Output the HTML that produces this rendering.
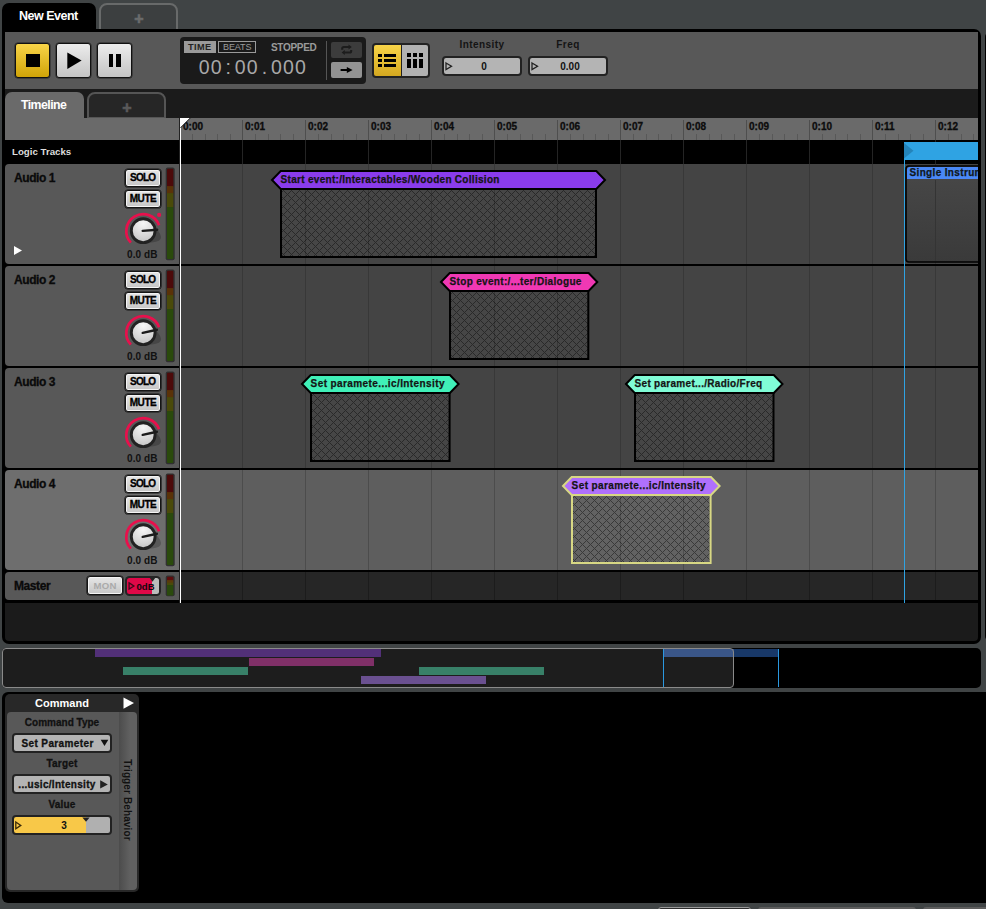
<!DOCTYPE html>
<html><head><meta charset="utf-8"><title>New Event</title><style>
html,body{margin:0;padding:0}
body{width:986px;height:909px;overflow:hidden;position:relative;background:#404445;font-family:"Liberation Sans",sans-serif;font-weight:bold;font-size:10px;color:#1a1a1a}
div,span{position:absolute;box-sizing:border-box;white-space:nowrap}
svg{position:absolute;overflow:visible}
.t{line-height:1;}
.k{-webkit-text-stroke:0.3px currentColor}
.btn{border:1px solid #141414;box-shadow:inset 0 0 0 1px #f4f4f4,0 0 0 0.6px #141414;border-radius:3px;background:linear-gradient(#e6e6e6,#c6c6c6)}
.fld{border:2px solid #222;border-radius:4px;background:#b4b4b4}
</style></head><body>
<div style="left:2px;top:3px;width:94px;height:30px;background:#000;border-radius:7px 7px 0 0"></div>
<div class="t" style="left:19px;top:9.6px;font-size:12.5px;letter-spacing:-0.5px;color:#fff">New Event</div>
<div style="left:99px;top:3px;width:79px;height:28px;background:#3c3f40;border:2px solid #686a6a;border-radius:8px 8px 0 0"></div>
<div class="t" style="left:134.3px;top:10.5px;font-size:16px;color:#6a6c6c;-webkit-text-stroke:0.6px #6a6c6c">+</div>
<div style="left:985px;top:33px;width:4px;height:607px;background:#000;border-radius:4px 0 0 4px"></div>
<div style="left:2px;top:29px;width:979px;height:615px;background:#000;border-radius:0 7px 7px 7px"></div>
<div id="main" style="left:5px;top:32px;width:973px;height:609px;background:#1b1b1b;overflow:hidden;border-radius:0 0 4px 4px">
<div style="left:0;top:0;width:973px;height:57px;background:#585858"></div>
<div style="left:10px;top:11px;width:35px;height:35px;border:1px solid #111;border-radius:3px;background:linear-gradient(#f8d448,#d0a408);box-shadow:0 0 0 0.5px #222"><div style="left:10px;top:10px;width:13.5px;height:13.2px;background:#000"></div></div>
<div style="left:51px;top:11px;width:35px;height:35px;border:1px solid #111;border-radius:3px;background:linear-gradient(#ececec,#c4c4c4);box-shadow:0 0 0 0.5px #222"><svg style="left:0;top:0" width="33" height="33"><path d="M10.3 8.4 L24.6 16.6 L10.3 24.9Z" fill="#000"/></svg></div>
<div style="left:92px;top:11px;width:35px;height:35px;border:1px solid #111;border-radius:3px;background:linear-gradient(#ececec,#c4c4c4);box-shadow:0 0 0 0.5px #222"><div style="left:11.2px;top:10px;width:4.2px;height:13.2px;background:#000"></div><div style="left:18.4px;top:10px;width:4.5px;height:13.2px;background:#000"></div></div>
<div style="left:175px;top:5px;width:186px;height:47px;background:#1a1a1a;border-radius:4px"></div>
<div style="left:179px;top:9px;width:32px;height:12px;background:#9a9a9a"></div>
<div class="t" style="left:183px;top:11.299999999999997px;font-size:9.2px;letter-spacing:0.4px;color:#222">TIME</div>
<div style="left:213px;top:9px;width:38px;height:12px;border:1px solid #9a9a9a"></div>
<div class="t" style="left:218px;top:11.200000000000003px;font-size:9px;letter-spacing:-0.1px;color:#9a9a9a;font-weight:normal">BEATS</div>
<div class="t" style="left:266px;top:10.600000000000001px;font-size:10px;letter-spacing:-0.3px;color:#9a9a9a">STOPPED</div>
<span class="t" style="left:193.10px;top:26px;width:12px;text-align:center;font-size:19.5px;font-weight:normal;color:#a8a8a8">0</span><span class="t" style="left:205.15px;top:26px;width:12px;text-align:center;font-size:19.5px;font-weight:normal;color:#a8a8a8">0</span><span class="t" style="left:217.20px;top:26px;width:12px;text-align:center;font-size:19.5px;font-weight:normal;color:#a8a8a8">:</span><span class="t" style="left:229.25px;top:26px;width:12px;text-align:center;font-size:19.5px;font-weight:normal;color:#a8a8a8">0</span><span class="t" style="left:241.30px;top:26px;width:12px;text-align:center;font-size:19.5px;font-weight:normal;color:#a8a8a8">0</span><span class="t" style="left:253.35px;top:26px;width:12px;text-align:center;font-size:19.5px;font-weight:normal;color:#a8a8a8">.</span><span class="t" style="left:265.40px;top:26px;width:12px;text-align:center;font-size:19.5px;font-weight:normal;color:#a8a8a8">0</span><span class="t" style="left:277.45px;top:26px;width:12px;text-align:center;font-size:19.5px;font-weight:normal;color:#a8a8a8">0</span><span class="t" style="left:289.50px;top:26px;width:12px;text-align:center;font-size:19.5px;font-weight:normal;color:#a8a8a8">0</span>
<div style="left:321px;top:9px;width:1px;height:39px;background:#555"></div>
<div style="left:326px;top:10px;width:31px;height:16px;background:#3c3c3c;border-radius:2px"></div>
<svg style="left:326px;top:10px" width="31" height="16"><g fill="none" stroke="#1c1c1c" stroke-width="2.1"><path d="M11.2 7.8 V6.6 Q11.2 5 12.8 5 H18"/><path d="M20.2 8 V8.9 Q20.2 10.5 18.6 10.5 H13.4"/></g><path d="M17.5 2.6 L20.8 5 L17.5 7.4Z" fill="#1c1c1c"/><path d="M13.8 8.1 L10.6 10.5 L13.8 12.9Z" fill="#1c1c1c"/></svg>
<div style="left:326px;top:30px;width:31px;height:16px;background:#939393;border-radius:2px"></div>
<svg style="left:326px;top:30px" width="31" height="16"><path d="M9.6 8 H17" stroke="#000" stroke-width="2"/><path d="M15.8 4.9 L21.6 8 L15.8 11.1Z" fill="#000"/></svg>
<div style="left:367px;top:11px;width:58px;height:35px;background:#222;border-radius:4px"></div>
<div style="left:369px;top:13px;width:26.6px;height:31px;background:linear-gradient(#f8d448,#d4a820);border-radius:2px 0 0 2px"></div>
<div style="left:397px;top:13px;width:26px;height:31px;background:#b2b2b2;border-radius:0 2px 2px 0"></div>
<div style="left:373px;top:22px;width:4px;height:3px;background:#000"></div><div style="left:379px;top:22px;width:12px;height:3px;background:#000"></div><div style="left:373px;top:27px;width:4px;height:3px;background:#000"></div><div style="left:379px;top:27px;width:12px;height:3px;background:#000"></div><div style="left:373px;top:32px;width:4px;height:3px;background:#000"></div><div style="left:379px;top:32px;width:12px;height:3px;background:#000"></div><div style="left:402px;top:21px;width:4px;height:4px;background:#000"></div><div style="left:402px;top:26.5px;width:4px;height:9px;background:#000"></div><div style="left:408px;top:21px;width:4px;height:4px;background:#000"></div><div style="left:408px;top:26.5px;width:4px;height:9px;background:#000"></div><div style="left:414px;top:21px;width:4px;height:4px;background:#000"></div><div style="left:414px;top:26.5px;width:4px;height:9px;background:#000"></div>
<div class="t" style="left:437px;top:8px;width:80px;text-align:center;font-size:10px;letter-spacing:0.45px;color:#141414">Intensity</div>
<div class="fld" style="left:437px;top:24px;width:80px;height:20px"></div>
<svg style="left:440px;top:30px" width="9" height="9"><path d="M1 1 L6.5 4.2 L1 7.5Z" fill="none" stroke="#222" stroke-width="1.3"/></svg>
<div class="t" style="left:437px;top:30px;width:84px;text-align:center;font-size:10px;color:#111">0</div>
<div class="t" style="left:523px;top:8px;width:80px;text-align:center;font-size:10px;letter-spacing:0.45px;color:#141414">Freq</div>
<div class="fld" style="left:523px;top:24px;width:80px;height:20px"></div>
<svg style="left:526px;top:30px" width="9" height="9"><path d="M1 1 L6.5 4.2 L1 7.5Z" fill="none" stroke="#222" stroke-width="1.3"/></svg>
<div class="t" style="left:523px;top:30px;width:84px;text-align:center;font-size:10px;color:#111">0.00</div>
<div style="left:0;top:60px;width:79px;height:27px;background:#6a6a6a;border-radius:7px 7px 0 0"></div>
<div class="t" style="left:16px;top:67.4px;font-size:12.3px;letter-spacing:-0.55px;color:#fff">Timeline</div>
<div style="left:82px;top:60px;width:79px;height:27px;background:#262626;border:2px solid #555;border-radius:8px 8px 0 0"></div>
<div class="t" style="left:117.3px;top:67.5px;font-size:16px;color:#5a5a5a;-webkit-text-stroke:0.6px #5a5a5a">+</div>
<div style="left:0;top:86px;width:973px;height:22px;background:#6a6a6a"></div>
<div class="t k" style="left:178px;top:90.4px;font-size:10px;letter-spacing:0.05px;color:#0c0c0c">0:00</div><div style="left:187px;top:102px;width:1px;height:6px;background:#585858"></div><div style="left:200px;top:102px;width:1px;height:6px;background:#585858"></div><div style="left:212px;top:102px;width:1px;height:6px;background:#585858"></div><div style="left:225px;top:102px;width:1px;height:6px;background:#585858"></div><div style="left:237px;top:88px;width:1px;height:20px;background:#4e4e4e"></div><div class="t k" style="left:240px;top:90.4px;font-size:10px;letter-spacing:0.05px;color:#0c0c0c">0:01</div><div style="left:250px;top:102px;width:1px;height:6px;background:#585858"></div><div style="left:263px;top:102px;width:1px;height:6px;background:#585858"></div><div style="left:275px;top:102px;width:1px;height:6px;background:#585858"></div><div style="left:288px;top:102px;width:1px;height:6px;background:#585858"></div><div style="left:300px;top:88px;width:1px;height:20px;background:#4e4e4e"></div><div class="t k" style="left:303px;top:90.4px;font-size:10px;letter-spacing:0.05px;color:#0c0c0c">0:02</div><div style="left:313px;top:102px;width:1px;height:6px;background:#585858"></div><div style="left:326px;top:102px;width:1px;height:6px;background:#585858"></div><div style="left:338px;top:102px;width:1px;height:6px;background:#585858"></div><div style="left:351px;top:102px;width:1px;height:6px;background:#585858"></div><div style="left:363px;top:88px;width:1px;height:20px;background:#4e4e4e"></div><div class="t k" style="left:366px;top:90.4px;font-size:10px;letter-spacing:0.05px;color:#0c0c0c">0:03</div><div style="left:376px;top:102px;width:1px;height:6px;background:#585858"></div><div style="left:389px;top:102px;width:1px;height:6px;background:#585858"></div><div style="left:401px;top:102px;width:1px;height:6px;background:#585858"></div><div style="left:414px;top:102px;width:1px;height:6px;background:#585858"></div><div style="left:426px;top:88px;width:1px;height:20px;background:#4e4e4e"></div><div class="t k" style="left:429px;top:90.4px;font-size:10px;letter-spacing:0.05px;color:#0c0c0c">0:04</div><div style="left:439px;top:102px;width:1px;height:6px;background:#585858"></div><div style="left:452px;top:102px;width:1px;height:6px;background:#585858"></div><div style="left:464px;top:102px;width:1px;height:6px;background:#585858"></div><div style="left:477px;top:102px;width:1px;height:6px;background:#585858"></div><div style="left:489px;top:88px;width:1px;height:20px;background:#4e4e4e"></div><div class="t k" style="left:492px;top:90.4px;font-size:10px;letter-spacing:0.05px;color:#0c0c0c">0:05</div><div style="left:502px;top:102px;width:1px;height:6px;background:#585858"></div><div style="left:515px;top:102px;width:1px;height:6px;background:#585858"></div><div style="left:527px;top:102px;width:1px;height:6px;background:#585858"></div><div style="left:540px;top:102px;width:1px;height:6px;background:#585858"></div><div style="left:552px;top:88px;width:1px;height:20px;background:#4e4e4e"></div><div class="t k" style="left:555px;top:90.4px;font-size:10px;letter-spacing:0.05px;color:#0c0c0c">0:06</div><div style="left:565px;top:102px;width:1px;height:6px;background:#585858"></div><div style="left:578px;top:102px;width:1px;height:6px;background:#585858"></div><div style="left:590px;top:102px;width:1px;height:6px;background:#585858"></div><div style="left:603px;top:102px;width:1px;height:6px;background:#585858"></div><div style="left:615px;top:88px;width:1px;height:20px;background:#4e4e4e"></div><div class="t k" style="left:618px;top:90.4px;font-size:10px;letter-spacing:0.05px;color:#0c0c0c">0:07</div><div style="left:628px;top:102px;width:1px;height:6px;background:#585858"></div><div style="left:641px;top:102px;width:1px;height:6px;background:#585858"></div><div style="left:653px;top:102px;width:1px;height:6px;background:#585858"></div><div style="left:666px;top:102px;width:1px;height:6px;background:#585858"></div><div style="left:678px;top:88px;width:1px;height:20px;background:#4e4e4e"></div><div class="t k" style="left:681px;top:90.4px;font-size:10px;letter-spacing:0.05px;color:#0c0c0c">0:08</div><div style="left:691px;top:102px;width:1px;height:6px;background:#585858"></div><div style="left:704px;top:102px;width:1px;height:6px;background:#585858"></div><div style="left:716px;top:102px;width:1px;height:6px;background:#585858"></div><div style="left:729px;top:102px;width:1px;height:6px;background:#585858"></div><div style="left:741px;top:88px;width:1px;height:20px;background:#4e4e4e"></div><div class="t k" style="left:744px;top:90.4px;font-size:10px;letter-spacing:0.05px;color:#0c0c0c">0:09</div><div style="left:754px;top:102px;width:1px;height:6px;background:#585858"></div><div style="left:767px;top:102px;width:1px;height:6px;background:#585858"></div><div style="left:779px;top:102px;width:1px;height:6px;background:#585858"></div><div style="left:792px;top:102px;width:1px;height:6px;background:#585858"></div><div style="left:804px;top:88px;width:1px;height:20px;background:#4e4e4e"></div><div class="t k" style="left:807px;top:90.4px;font-size:10px;letter-spacing:0.05px;color:#0c0c0c">0:10</div><div style="left:817px;top:102px;width:1px;height:6px;background:#585858"></div><div style="left:830px;top:102px;width:1px;height:6px;background:#585858"></div><div style="left:842px;top:102px;width:1px;height:6px;background:#585858"></div><div style="left:855px;top:102px;width:1px;height:6px;background:#585858"></div><div style="left:867px;top:88px;width:1px;height:20px;background:#4e4e4e"></div><div class="t k" style="left:870px;top:90.4px;font-size:10px;letter-spacing:0.05px;color:#0c0c0c">0:11</div><div style="left:880px;top:102px;width:1px;height:6px;background:#585858"></div><div style="left:893px;top:102px;width:1px;height:6px;background:#585858"></div><div style="left:905px;top:102px;width:1px;height:6px;background:#585858"></div><div style="left:918px;top:102px;width:1px;height:6px;background:#585858"></div><div style="left:930px;top:88px;width:1px;height:20px;background:#4e4e4e"></div><div class="t k" style="left:933px;top:90.4px;font-size:10px;letter-spacing:0.05px;color:#0c0c0c">0:12</div><div style="left:943px;top:102px;width:1px;height:6px;background:#585858"></div><div style="left:956px;top:102px;width:1px;height:6px;background:#585858"></div><div style="left:968px;top:102px;width:1px;height:6px;background:#585858"></div>
<div style="left:0;top:108px;width:973px;height:24px;background:#000"></div>
<div class="t" style="left:7px;top:115px;font-size:9.7px;color:#ddd">Logic Tracks</div>
<div style="left:0;top:132px;width:973px;height:439px;background:#000"></div>
<svg width="0" height="0"><defs><radialGradient id="kg" cx="0.5" cy="0.2" r="0.9"><stop offset="0" stop-color="#f6f6f6"/><stop offset="0.6" stop-color="#d6d6d6"/><stop offset="1" stop-color="#bcbcbc"/></radialGradient></defs></svg>
<div style="left:0;top:132px;width:174px;height:100px;background:#585858;border-radius:4px 0 0 4px"></div>
<div style="left:176px;top:132px;width:797px;height:100px;background:#444444"></div>
<div class="t k" style="left:9px;top:140.2px;font-size:12px;letter-spacing:-0.42px;color:#0a0a0a">Audio 1</div>
<div class="btn" style="left:120px;top:136.5px;width:36px;height:18px"></div><div class="t k" style="left:120px;top:140.5px;width:36px;text-align:center;font-size:10px;color:#000;letter-spacing:-0.8px;text-indent:-0.8px">SOLO</div>
<div class="btn" style="left:120px;top:157.5px;width:36px;height:18px"></div><div class="t k" style="left:120px;top:161.5px;width:36px;text-align:center;font-size:10px;color:#000;letter-spacing:-0.45px">MUTE</div>
<div class="t" style="left:122px;top:218px;font-size:10px;color:#111;letter-spacing:0.1px">0.0 dB</div>
<svg style="left:0;top:132px" width="174" height="100"><path d="M125.84 78.63 A16.9 16.9 0 1 1 154.08 61.32" fill="none" stroke="#e8104c" stroke-width="2.7"/><path d="M150.33 63.68 Q165.15 78.70 141.65 78.72Z" fill="#000" fill-opacity="0.2"/><circle cx="138.2" cy="66.7" r="11.9" fill="url(#kg)" stroke="#222" stroke-width="2.9"/><path d="M137.70 66.90 L152.17 65.72" stroke="#1c1c1c" stroke-width="2.4" stroke-linecap="round"/><circle cx="154.1" cy="50.900000000000006" r="2.1" fill="#e8104c"/><rect x="160.7" y="3.6" width="9" height="92.6" rx="2" fill="#303030"/><clipPath id="mc160.7_3.6"><rect x="162.0" y="4.8" width="6.4" height="90.19999999999999" rx="1"/></clipPath><g clip-path="url(#mc160.7_3.6)"><rect x="161.7" y="3.6" width="7" height="19.0" fill="#4c0a0a"/><rect x="161.7" y="22.1" width="7" height="7.5" fill="#5a3208"/><rect x="161.7" y="29.1" width="7" height="14.5" fill="#4a4a0a"/><rect x="161.7" y="43.1" width="7" height="52.39999999999999" fill="#2a4a0c"/></g></svg>
<div style="left:0;top:234px;width:174px;height:100px;background:#585858;border-radius:4px 0 0 4px"></div>
<div style="left:176px;top:234px;width:797px;height:100px;background:#444444"></div>
<div class="t k" style="left:9px;top:242.2px;font-size:12px;letter-spacing:-0.42px;color:#0a0a0a">Audio 2</div>
<div class="btn" style="left:120px;top:238.5px;width:36px;height:18px"></div><div class="t k" style="left:120px;top:242.5px;width:36px;text-align:center;font-size:10px;color:#000;letter-spacing:-0.8px;text-indent:-0.8px">SOLO</div>
<div class="btn" style="left:120px;top:259.5px;width:36px;height:18px"></div><div class="t k" style="left:120px;top:263.5px;width:36px;text-align:center;font-size:10px;color:#000;letter-spacing:-0.45px">MUTE</div>
<div class="t" style="left:122px;top:320px;font-size:10px;color:#111;letter-spacing:0.1px">0.0 dB</div>
<svg style="left:0;top:234px" width="174" height="100"><path d="M125.84 78.63 A16.9 16.9 0 1 1 154.08 61.32" fill="none" stroke="#e8104c" stroke-width="2.7"/><path d="M150.33 63.68 Q165.15 78.70 141.65 78.72Z" fill="#000" fill-opacity="0.2"/><circle cx="138.2" cy="66.7" r="11.9" fill="url(#kg)" stroke="#222" stroke-width="2.9"/><path d="M137.70 66.90 L151.89 63.79" stroke="#1c1c1c" stroke-width="2.4" stroke-linecap="round"/><rect x="160.7" y="3.6" width="9" height="92.6" rx="2" fill="#303030"/><clipPath id="mc160.7_3.6"><rect x="162.0" y="4.8" width="6.4" height="90.19999999999999" rx="1"/></clipPath><g clip-path="url(#mc160.7_3.6)"><rect x="161.7" y="3.6" width="7" height="19.0" fill="#4c0a0a"/><rect x="161.7" y="22.1" width="7" height="7.5" fill="#5a3208"/><rect x="161.7" y="29.1" width="7" height="14.5" fill="#4a4a0a"/><rect x="161.7" y="43.1" width="7" height="52.39999999999999" fill="#2a4a0c"/></g></svg>
<div style="left:0;top:336px;width:174px;height:100px;background:#585858;border-radius:4px 0 0 4px"></div>
<div style="left:176px;top:336px;width:797px;height:100px;background:#444444"></div>
<div class="t k" style="left:9px;top:344.2px;font-size:12px;letter-spacing:-0.42px;color:#0a0a0a">Audio 3</div>
<div class="btn" style="left:120px;top:340.5px;width:36px;height:18px"></div><div class="t k" style="left:120px;top:344.5px;width:36px;text-align:center;font-size:10px;color:#000;letter-spacing:-0.8px;text-indent:-0.8px">SOLO</div>
<div class="btn" style="left:120px;top:361.5px;width:36px;height:18px"></div><div class="t k" style="left:120px;top:365.5px;width:36px;text-align:center;font-size:10px;color:#000;letter-spacing:-0.45px">MUTE</div>
<div class="t" style="left:122px;top:422px;font-size:10px;color:#111;letter-spacing:0.1px">0.0 dB</div>
<svg style="left:0;top:336px" width="174" height="100"><path d="M125.84 78.63 A16.9 16.9 0 1 1 154.08 61.32" fill="none" stroke="#e8104c" stroke-width="2.7"/><path d="M150.33 63.68 Q165.15 78.70 141.65 78.72Z" fill="#000" fill-opacity="0.2"/><circle cx="138.2" cy="66.7" r="11.9" fill="url(#kg)" stroke="#222" stroke-width="2.9"/><path d="M137.70 66.90 L151.89 63.79" stroke="#1c1c1c" stroke-width="2.4" stroke-linecap="round"/><rect x="160.7" y="3.6" width="9" height="92.6" rx="2" fill="#303030"/><clipPath id="mc160.7_3.6"><rect x="162.0" y="4.8" width="6.4" height="90.19999999999999" rx="1"/></clipPath><g clip-path="url(#mc160.7_3.6)"><rect x="161.7" y="3.6" width="7" height="19.0" fill="#4c0a0a"/><rect x="161.7" y="22.1" width="7" height="7.5" fill="#5a3208"/><rect x="161.7" y="29.1" width="7" height="14.5" fill="#4a4a0a"/><rect x="161.7" y="43.1" width="7" height="52.39999999999999" fill="#2a4a0c"/></g></svg>
<div style="left:0;top:438px;width:174px;height:100px;background:#6e6e6e;border-radius:4px 0 0 4px"></div>
<div style="left:176px;top:438px;width:797px;height:100px;background:#5e5e5e"></div>
<div class="t k" style="left:9px;top:446.2px;font-size:12px;letter-spacing:-0.42px;color:#0a0a0a">Audio 4</div>
<div class="btn" style="left:120px;top:442.5px;width:36px;height:18px"></div><div class="t k" style="left:120px;top:446.5px;width:36px;text-align:center;font-size:10px;color:#000;letter-spacing:-0.8px;text-indent:-0.8px">SOLO</div>
<div class="btn" style="left:120px;top:463.5px;width:36px;height:18px"></div><div class="t k" style="left:120px;top:467.5px;width:36px;text-align:center;font-size:10px;color:#000;letter-spacing:-0.45px">MUTE</div>
<div class="t" style="left:122px;top:524px;font-size:10px;color:#111;letter-spacing:0.1px">0.0 dB</div>
<svg style="left:0;top:438px" width="174" height="100"><path d="M125.84 78.63 A16.9 16.9 0 1 1 154.08 61.32" fill="none" stroke="#e8104c" stroke-width="2.7"/><path d="M150.33 63.68 Q165.15 78.70 141.65 78.72Z" fill="#000" fill-opacity="0.2"/><circle cx="138.2" cy="66.7" r="11.9" fill="url(#kg)" stroke="#222" stroke-width="2.9"/><path d="M137.70 66.90 L151.89 63.79" stroke="#1c1c1c" stroke-width="2.4" stroke-linecap="round"/><rect x="160.7" y="3.6" width="9" height="92.6" rx="2" fill="#303030"/><clipPath id="mc160.7_3.6"><rect x="162.0" y="4.8" width="6.4" height="90.19999999999999" rx="1"/></clipPath><g clip-path="url(#mc160.7_3.6)"><rect x="161.7" y="3.6" width="7" height="19.0" fill="#4c0a0a"/><rect x="161.7" y="22.1" width="7" height="7.5" fill="#5a3208"/><rect x="161.7" y="29.1" width="7" height="14.5" fill="#4a4a0a"/><rect x="161.7" y="43.1" width="7" height="52.39999999999999" fill="#2a4a0c"/></g></svg>
<svg style="left:9px;top:214px" width="9" height="10"><path d="M0 0 L8 4.5 L0 9Z" fill="#fff"/></svg>
<div style="left:0;top:540px;width:174px;height:28px;background:#585858;border-radius:4px 0 0 4px"></div>
<div style="left:176px;top:540px;width:797px;height:28px;background:#262626"></div>
<div class="t k" style="left:9px;top:547.7px;font-size:12px;letter-spacing:-0.42px;color:#0a0a0a">Master</div>
<div class="btn" style="left:82px;top:544px;width:36px;height:19px"></div><div class="t" style="left:82px;top:549px;width:36px;text-align:center;font-size:9.6px;letter-spacing:0.35px;text-indent:0.3px;color:#aaa">MON</div>
<div style="left:120px;top:544px;width:36px;height:20px;background:#242424;border-radius:4.5px"></div>
<div style="left:122px;top:546px;width:32px;height:16px;background:linear-gradient(90deg,#e00848 0,#e00848 25px,#bcbcbc 25px);border-radius:2.5px"></div>
<svg style="left:120px;top:544px" width="36" height="19"><path d="M4.1 6.9 L8.9 10 L4.1 13.1Z" fill="none" stroke="#3a0a1a" stroke-width="1.3"/><path d="M24.5 1.5 L30.5 1.5 L27.5 5.8Z" fill="#242424"/></svg>
<div class="t" style="left:131.4px;top:549.5px;font-size:9.6px;letter-spacing:0.1px;color:#14060c">0dB</div>
<svg style="left:0;top:540px" width="174" height="28"><rect x="160.7" y="3.6" width="9" height="20.6" rx="2" fill="#303030"/><clipPath id="mc160.7_3.6"><rect x="162.0" y="4.8" width="6.4" height="18.200000000000003" rx="1"/></clipPath><g clip-path="url(#mc160.7_3.6)"><rect x="161.7" y="3.6" width="7" height="5.0" fill="#5c0c0c"/><rect x="161.7" y="8.1" width="7" height="3.0" fill="#5a3a0a"/><rect x="161.7" y="10.6" width="7" height="3.0" fill="#4a4a0a"/><rect x="161.7" y="13.1" width="7" height="10.400000000000002" fill="#2a4a0c"/></g></svg>
<svg style="left:0;top:0" width="973" height="609" viewBox="5 32 973 609"><defs><pattern id="hx" width="8" height="8" patternUnits="userSpaceOnUse"><g fill="#000" fill-opacity="0.42"><rect x="0" y="0" width="1" height="1"/><rect x="1" y="1" width="1" height="1"/><rect x="2" y="2" width="1" height="1"/><rect x="3" y="3" width="1" height="1"/><rect x="4" y="4" width="1" height="1"/><rect x="5" y="5" width="1" height="1"/><rect x="6" y="6" width="1" height="1"/><rect x="7" y="7" width="1" height="1"/><rect x="1" y="7" width="1" height="1"/><rect x="2" y="6" width="1" height="1"/><rect x="3" y="5" width="1" height="1"/><rect x="5" y="3" width="1" height="1"/><rect x="6" y="2" width="1" height="1"/><rect x="7" y="1" width="1" height="1"/></g></pattern></defs><path d="M242.5 140V164" stroke="#242424"/><path d="M242.5 164V264" stroke="#383838"/><path d="M242.5 266V366" stroke="#383838"/><path d="M242.5 368V468" stroke="#383838"/><path d="M242.5 470V570" stroke="#4c4c4c"/><path d="M242.5 572V600" stroke="#1c1c1c"/><path d="M305.5 140V164" stroke="#242424"/><path d="M305.5 164V264" stroke="#383838"/><path d="M305.5 266V366" stroke="#383838"/><path d="M305.5 368V468" stroke="#383838"/><path d="M305.5 470V570" stroke="#4c4c4c"/><path d="M305.5 572V600" stroke="#1c1c1c"/><path d="M368.5 140V164" stroke="#242424"/><path d="M368.5 164V264" stroke="#383838"/><path d="M368.5 266V366" stroke="#383838"/><path d="M368.5 368V468" stroke="#383838"/><path d="M368.5 470V570" stroke="#4c4c4c"/><path d="M368.5 572V600" stroke="#1c1c1c"/><path d="M431.5 140V164" stroke="#242424"/><path d="M431.5 164V264" stroke="#383838"/><path d="M431.5 266V366" stroke="#383838"/><path d="M431.5 368V468" stroke="#383838"/><path d="M431.5 470V570" stroke="#4c4c4c"/><path d="M431.5 572V600" stroke="#1c1c1c"/><path d="M494.5 140V164" stroke="#242424"/><path d="M494.5 164V264" stroke="#383838"/><path d="M494.5 266V366" stroke="#383838"/><path d="M494.5 368V468" stroke="#383838"/><path d="M494.5 470V570" stroke="#4c4c4c"/><path d="M494.5 572V600" stroke="#1c1c1c"/><path d="M557.5 140V164" stroke="#242424"/><path d="M557.5 164V264" stroke="#383838"/><path d="M557.5 266V366" stroke="#383838"/><path d="M557.5 368V468" stroke="#383838"/><path d="M557.5 470V570" stroke="#4c4c4c"/><path d="M557.5 572V600" stroke="#1c1c1c"/><path d="M620.5 140V164" stroke="#242424"/><path d="M620.5 164V264" stroke="#383838"/><path d="M620.5 266V366" stroke="#383838"/><path d="M620.5 368V468" stroke="#383838"/><path d="M620.5 470V570" stroke="#4c4c4c"/><path d="M620.5 572V600" stroke="#1c1c1c"/><path d="M683.5 140V164" stroke="#242424"/><path d="M683.5 164V264" stroke="#383838"/><path d="M683.5 266V366" stroke="#383838"/><path d="M683.5 368V468" stroke="#383838"/><path d="M683.5 470V570" stroke="#4c4c4c"/><path d="M683.5 572V600" stroke="#1c1c1c"/><path d="M746.5 140V164" stroke="#242424"/><path d="M746.5 164V264" stroke="#383838"/><path d="M746.5 266V366" stroke="#383838"/><path d="M746.5 368V468" stroke="#383838"/><path d="M746.5 470V570" stroke="#4c4c4c"/><path d="M746.5 572V600" stroke="#1c1c1c"/><path d="M809.5 140V164" stroke="#242424"/><path d="M809.5 164V264" stroke="#383838"/><path d="M809.5 266V366" stroke="#383838"/><path d="M809.5 368V468" stroke="#383838"/><path d="M809.5 470V570" stroke="#4c4c4c"/><path d="M809.5 572V600" stroke="#1c1c1c"/><path d="M872.5 140V164" stroke="#242424"/><path d="M872.5 164V264" stroke="#383838"/><path d="M872.5 266V366" stroke="#383838"/><path d="M872.5 368V468" stroke="#383838"/><path d="M872.5 470V570" stroke="#4c4c4c"/><path d="M872.5 572V600" stroke="#1c1c1c"/><path d="M935.5 140V164" stroke="#242424"/><path d="M935.5 164V264" stroke="#383838"/><path d="M935.5 266V366" stroke="#383838"/><path d="M935.5 368V468" stroke="#383838"/><path d="M935.5 470V570" stroke="#4c4c4c"/><path d="M935.5 572V600" stroke="#1c1c1c"/><defs><linearGradient id="ig" x1="0" y1="0" x2="0" y2="1"><stop offset="0" stop-color="#484848"/><stop offset="1" stop-color="#3a3a3a"/></linearGradient></defs><rect x="906" y="166" width="90" height="96" rx="3" fill="url(#ig)" stroke="#000" stroke-width="1.6"/><path d="M907 179 V169.5 Q907 167 909.5 167 H980 V179Z" fill="#4a88f6"/><path d="M935.5 180V261" stroke="#343434"/><text x="909.5" y="176.3" font-size="10" font-weight="bold" fill="#101820" stroke="#101820" stroke-width="0.25" letter-spacing="0.35" font-family="Liberation Sans, sans-serif">Single Instrument</text><rect x="904" y="142" width="80" height="18" fill="#2fa3e3"/><path d="M904 143 L913.5 150.7 L904 158.5Z" fill="#2484ba"/><path d="M904.5 160V603" stroke="#2fa3e3"/><g transform="translate(283 190)"><rect x="-2" y="-1" width="315" height="68" fill="#464646"/><rect x="-2" y="-1" width="315" height="68" fill="url(#hx)" stroke="#000" stroke-width="2"/></g><path d="M305.5 190V256" stroke="#000" stroke-opacity="0.2"/><path d="M368.5 190V256" stroke="#000" stroke-opacity="0.2"/><path d="M431.5 190V256" stroke="#000" stroke-opacity="0.2"/><path d="M494.5 190V256" stroke="#000" stroke-opacity="0.2"/><path d="M557.5 190V256" stroke="#000" stroke-opacity="0.2"/><path d="M272 180 L280.7 171 H596.3 L605 180 L596.3 189 H280.7Z" fill="#8a3cec" stroke="#000" stroke-width="2" stroke-linejoin="miter"/><text x="280.6" y="183.4" font-size="10" font-weight="bold" fill="#141414" stroke="#141414" stroke-width="0.25" textLength="218.8" lengthAdjust="spacing" font-family="Liberation Sans, sans-serif">Start event:/Interactables/Wooden Collision</text><g transform="translate(452 292)"><rect x="-2" y="-1" width="138.29999999999995" height="68" fill="#464646"/><rect x="-2" y="-1" width="138.29999999999995" height="68" fill="url(#hx)" stroke="#000" stroke-width="2"/></g><path d="M494.5 292V358" stroke="#000" stroke-opacity="0.2"/><path d="M557.5 292V358" stroke="#000" stroke-opacity="0.2"/><path d="M441 282 L449.7 273 H588.5999999999999 L597.3 282 L588.5999999999999 291 H449.7Z" fill="#f038b4" stroke="#000" stroke-width="2" stroke-linejoin="miter"/><text x="449.6" y="285.4" font-size="10" font-weight="bold" fill="#141414" stroke="#141414" stroke-width="0.25" textLength="131.8" lengthAdjust="spacing" font-family="Liberation Sans, sans-serif">Stop event:/...ter/Dialogue</text><g transform="translate(313 394)"><rect x="-2" y="-1" width="138.60000000000002" height="68" fill="#464646"/><rect x="-2" y="-1" width="138.60000000000002" height="68" fill="url(#hx)" stroke="#000" stroke-width="2"/></g><path d="M368.5 394V460" stroke="#000" stroke-opacity="0.2"/><path d="M431.5 394V460" stroke="#000" stroke-opacity="0.2"/><path d="M302 384 L310.7 375 H449.90000000000003 L458.6 384 L449.90000000000003 393 H310.7Z" fill="#40f0b8" stroke="#000" stroke-width="2" stroke-linejoin="miter"/><text x="310.6" y="387.4" font-size="10" font-weight="bold" fill="#141414" stroke="#141414" stroke-width="0.25" textLength="133.9" lengthAdjust="spacing" font-family="Liberation Sans, sans-serif">Set paramete...ic/Intensity</text><g transform="translate(637 394)"><rect x="-2" y="-1" width="138.5" height="68" fill="#464646"/><rect x="-2" y="-1" width="138.5" height="68" fill="url(#hx)" stroke="#000" stroke-width="2"/></g><path d="M683.5 394V460" stroke="#000" stroke-opacity="0.2"/><path d="M746.5 394V460" stroke="#000" stroke-opacity="0.2"/><path d="M626 384 L634.7 375 H773.8 L782.5 384 L773.8 393 H634.7Z" fill="#80fcd6" stroke="#000" stroke-width="2" stroke-linejoin="miter"/><text x="634.6" y="387.4" font-size="10" font-weight="bold" fill="#141414" stroke="#141414" stroke-width="0.25" textLength="127.5" lengthAdjust="spacing" font-family="Liberation Sans, sans-serif">Set paramet.../Radio/Freq</text><g transform="translate(574 496)"><rect x="-2" y="-1" width="138.60000000000002" height="68" fill="#626262"/><rect x="-2" y="-1" width="138.60000000000002" height="68" fill="url(#hx)" stroke="#d8d884" stroke-width="2"/></g><path d="M620.5 496V562" stroke="#000" stroke-opacity="0.2"/><path d="M683.5 496V562" stroke="#000" stroke-opacity="0.2"/><path d="M563 486 L571.7 477 H710.9 L719.6 486 L710.9 495 H571.7Z" fill="#b070fc" stroke="#d8d884" stroke-width="2" stroke-linejoin="miter"/><text x="571.6" y="489.4" font-size="10" font-weight="bold" fill="#141414" stroke="#141414" stroke-width="0.25" textLength="133.9" lengthAdjust="spacing" font-family="Liberation Sans, sans-serif">Set paramete...ic/Intensity</text><path d="M179.5 118V603" stroke="#222"/><path d="M180.5 118V603" stroke="#fff"/><path d="M180 118 H190 L180 128Z" fill="#fff"/><path d="M190.3 118 L180.5 127.8" stroke="#222" stroke-width="1"/></svg>
</div>
<div style="left:700px;top:648px;width:281px;height:40px;background:#000;border-radius:0 5px 5px 0"></div>
<div style="left:2px;top:648px;width:732px;height:40px;background:#1d1d1d;border-radius:4px"></div>
<div style="left:95px;top:649px;width:286px;height:8px;background:#523078"></div><div style="left:249px;top:658px;width:125px;height:8px;background:#803068"></div><div style="left:122.5px;top:667px;width:125.0px;height:8px;background:#388068"></div><div style="left:418.5px;top:667px;width:125.0px;height:8px;background:#388068"></div><div style="left:360.5px;top:676px;width:125.5px;height:8px;background:#6a5090"></div><div style="left:664px;top:649px;width:70px;height:8px;background:#3a5688"></div><div style="left:734px;top:649px;width:45px;height:8px;background:#183868"></div><div style="left:663px;top:649px;width:1px;height:38px;background:#2a98e0"></div><div style="left:778px;top:649px;width:1px;height:38px;background:#2a98e0"></div>
<div style="left:2px;top:648px;width:732px;height:40px;border:1px solid #8a8a8a;border-radius:4px"></div>
<div style="left:2px;top:692px;width:990px;height:211px;background:#000;border-radius:6px 0 0 6px"></div>
<div style="left:5px;top:694px;width:134px;height:198px;background:#282828;border-radius:5px"></div>
<div class="t" style="left:5px;top:698px;width:114px;text-align:center;font-size:11px;color:#fff">Command</div>
<svg style="left:123px;top:697px" width="12" height="13"><path d="M0.5 0.5 L11 6 L0.5 11.8Z" fill="#fff"/></svg>
<div style="left:7px;top:712px;width:112px;height:178px;background:#585858;border-radius:4px 0 0 4px"></div>
<div style="left:119px;top:712px;width:18px;height:178px;background:linear-gradient(90deg,#4c4c4c,#606060 60%);border-radius:0 4px 4px 0"></div>
<div class="t" style="left:127.3px;top:799.7px;font-size:10px;color:#111;transform:translate(-50%,-50%) rotate(90deg);letter-spacing:0.12px">Trigger Behavior</div>
<div class="t k" style="left:7px;top:717.5px;width:110px;text-align:center;font-size:10px;color:#111">Command Type</div>
<div class="fld" style="left:12px;top:733px;width:100px;height:20px"></div>
<div class="t k" style="left:21.5px;top:739px;font-size:10px;color:#111;letter-spacing:0.38px">Set Parameter</div>
<svg style="left:100px;top:739px" width="9" height="8"><path d="M0.7 0.7 H8.3 L4.5 7Z" fill="#111"/></svg>
<div class="t k" style="left:7px;top:758.5px;width:110px;text-align:center;font-size:10px;color:#111;letter-spacing:0.2px">Target</div>
<div class="fld" style="left:12px;top:774px;width:100px;height:20px"></div>
<div class="t k" style="left:18.3px;top:780px;font-size:10px;color:#111;letter-spacing:0.3px">...usic/Intensity</div>
<svg style="left:100px;top:779.5px" width="9" height="9"><path d="M0.2 0.3 L7.8 4.4 L0.2 8.5Z" fill="#222"/></svg>
<div class="t k" style="left:7px;top:799.5px;width:110px;text-align:center;font-size:10px;color:#111;letter-spacing:0.2px">Value</div>
<div class="fld" style="left:12px;top:815px;width:100px;height:20px;background:linear-gradient(90deg,#f8c848 0,#f8c848 72px,#b0b0b0 72px)"></div>
<svg style="left:12px;top:815.5px" width="100" height="20"><path d="M3.8 6 L8.8 9.4 L3.8 12.8Z" fill="none" stroke="#3a2a08" stroke-width="1.3"/><path d="M70.3 1.5 H77.7 L74 5.8Z" fill="#222"/></svg>
<div class="t" style="left:12px;top:821px;width:104px;text-align:center;font-size:10px;color:#111">3</div>
<div style="left:658px;top:906.5px;width:93px;height:10px;background:#2c2c2c;border:1px solid #9a9a9a;border-radius:3px"></div>
<div style="left:757.5px;top:906.5px;width:158px;height:10px;background:#5e5e5e;border-radius:3px"></div>
<div style="left:922.5px;top:906.5px;width:80px;height:10px;background:#5e5e5e;border-radius:3px"></div>
</body></html>
